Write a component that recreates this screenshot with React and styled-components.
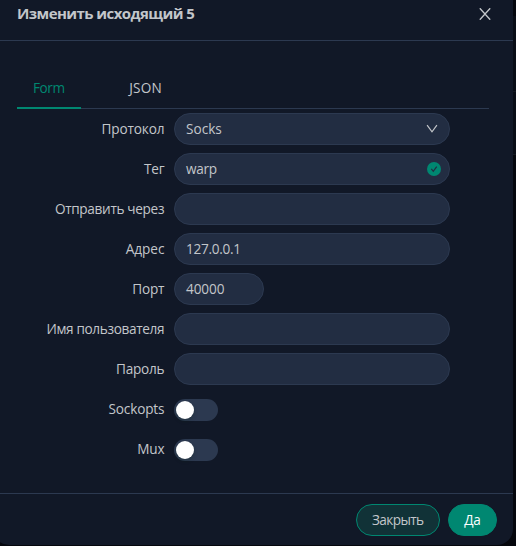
import React from "react";
import styled, { createGlobalStyle } from "styled-components";

const Global = createGlobalStyle`
  *, *::before, *::after { box-sizing: border-box; }
  html, body { margin: 0; background: #05070d; }
  body { width: 516px; height: 546px; overflow: hidden; }
  button, input { font: inherit; }
`;

const Page = styled.main`
  position: relative;
  width: 516px;
  height: 546px;
  overflow: hidden;
  background: #05070d;
  font-family: "Open Sans", "Noto Sans", sans-serif;
  font-size: 13.6px;
  font-weight: 500;
  line-height: 22px;
  color: #c3c6ca;
`;

const Backdrop = styled.div`
  position: absolute;
  top: 0;
  right: 0;
  width: 20px;
  height: 546px;
  display: grid;
  grid-template-rows: 16px 76px 63px 391px;
`;

const BackdropPanel = styled.div`
  background: ${(p) => (p.$lit ? "#090d16" : "#05070d")};
  border-bottom: 1px solid ${(p) => (p.$lit ? "#151a22" : "transparent")};
`;

const Dialog = styled.section`
  position: relative;
  width: 520px;
  height: 545px;
  margin-left: -7px;
  display: flex;
  flex-direction: column;
  background: #111827;
  border-radius: 0 0 16px 16px;
`;

const Header = styled.header`
  height: 41px;
  padding: 3px 22px 0 24px;
  display: flex;
  justify-content: space-between;
  align-items: flex-start;
  border-bottom: 1px solid #2c3950;
`;

const Label = styled.span`
  letter-spacing: ${(p) => p.$track || 0}px;
  margin-right: ${(p) => -(p.$track || 0)}px;
  white-space: nowrap;
`;

const Title = styled.h1`
  margin: 0;
  font-size: 15px;
  font-weight: 700;
  line-height: 20px;
`;

const CloseButton = styled.button`
  width: 12px;
  height: 12px;
  margin-top: 5px;
  padding: 0;
  border: 0;
  background: none;
  color: inherit;
  svg { display: block; }
`;

const Tabs = styled.nav`
  margin: 24px 24px 0;
  width: 472px;
  height: 44px;
  display: flex;
  gap: 32px;
  border-bottom: 1px solid #2c3950;
`;

const Tab = styled.button`
  width: ${(p) => p.$width}px;
  height: 44px;
  padding: 3px 0 0;
  border: 0;
  border-bottom: 2px solid ${(p) => (p.$active ? "#008771" : "transparent")};
  background: none;
  color: ${(p) => (p.$active ? "#008771" : "inherit")};
`;

const Form = styled.form`
  flex: 1;
  padding-top: 4px;
`;

const Row = styled.div`
  display: grid;
  grid-template-columns: 171.5px 276px;
  column-gap: 9.5px;
  align-items: center;
  height: 32px;
  margin-bottom: 8px;
`;

const RowLabel = styled.label`
  display: flex;
  justify-content: flex-end;
`;

const Field = styled.div`
  width: ${(p) => p.$width || 276}px;
  height: 32px;
  padding: 0 ${(p) => p.$end || 11}px 0 11px;
  display: flex;
  align-items: center;
  justify-content: space-between;
  background: #222d42;
  border: 1px solid #2c3950;
  border-radius: 16px;
  svg { flex: none; }
`;

const Toggle = styled.button`
  width: 44px;
  height: 22px;
  margin-top: 2px;
  padding: 2px;
  display: flex;
  border: 0;
  border-radius: 11px;
  background: #2c3950;
`;

const Knob = styled.span`
  width: 18px;
  height: 18px;
  border-radius: 50%;
  background: #fff;
  box-shadow: 0 2px 4px rgba(0, 35, 11, 0.2);
`;

const Footer = styled.footer`
  height: 52px;
  padding: 10px 16px;
  display: flex;
  justify-content: flex-end;
  gap: 8px;
  border-top: 1px solid #2c3950;
`;

const Button = styled.button`
  width: ${(p) => p.$width}px;
  height: 32px;
  padding: 0;
  border-radius: 16px;
  border: 1px solid #008771;
  background: ${(p) => (p.$primary ? "#008771" : "#113237")};
  color: ${(p) => (p.$primary ? "#fff" : "inherit")};
`;

const CloseIcon = () => (
  <svg width="12" height="12" viewBox="0 0 12 12" fill="none" stroke="currentColor" strokeWidth="1.4">
    <path d="M0.8 0.3 L11.2 11.7 M11.2 0.3 L0.8 11.7" />
  </svg>
);

const ChevronIcon = () => (
  <svg width="12" height="12" viewBox="0 0 12 12" fill="none" stroke="currentColor" strokeWidth="1.2">
    <path d="M1.1 2.1 L6 8.8 L10.9 2.1" />
  </svg>
);

const ValidIcon = () => (
  <svg width="14" height="14" viewBox="0 0 14 14" fill="none">
    <circle cx="7" cy="7" r="7" fill="#008771" />
    <path d="M4.3 6.8 L6.3 9.3 L9.7 4.7" stroke="#222d42" strokeWidth="1.2" />
  </svg>
);

const fields = [
  { label: "Протокол", track: -0.15, value: "Socks", valueTrack: 0, icon: <ChevronIcon /> },
  { label: "Тег", track: -0.2, value: "warp", valueTrack: -0.3, icon: <ValidIcon />, end: 8 },
  { label: "Отправить через", track: -0.32, value: "" },
  { label: "Адрес", track: 0, value: "127.0.0.1", valueTrack: -0.3 },
  { label: "Порт", track: -0.15, value: "40000", valueTrack: -0.1, width: 90 },
  { label: "Имя пользователя", track: -0.34, value: "" },
  { label: "Пароль", track: -0.25, value: "" },
];

const switches = [
  { label: "Sockopts", track: -0.15 },
  { label: "Mux", track: -0.2 },
];

export default function App() {
  return (
    <Page>
      <Global />
      <Backdrop>
        <BackdropPanel />
        <BackdropPanel $lit />
        <BackdropPanel $lit />
        <BackdropPanel />
      </Backdrop>
      <Dialog role="dialog">
        <Header>
          <Title><Label $track={-0.56}>Изменить исходящий 5</Label></Title>
          <CloseButton aria-label="Закрыть"><CloseIcon /></CloseButton>
        </Header>
        <Tabs>
          <Tab $active $width={64}><Label $track={-0.4}>Form</Label></Tab>
          <Tab $width={65}><Label $track={0.2}>JSON</Label></Tab>
        </Tabs>
        <Form>
          {fields.map((f) => (
            <Row key={f.label}>
              <RowLabel><Label $track={f.track}>{f.label}</Label></RowLabel>
              <Field $width={f.width} $end={f.end}>
                <Label $track={f.valueTrack}>{f.value}</Label>
                {f.icon}
              </Field>
            </Row>
          ))}
          {switches.map((s) => (
            <Row key={s.label}>
              <RowLabel><Label $track={s.track}>{s.label}</Label></RowLabel>
              <Toggle type="button" role="switch" aria-checked="false"><Knob /></Toggle>
            </Row>
          ))}
        </Form>
        <Footer>
          <Button $width={84}><Label $track={-0.58}>Закрыть</Label></Button>
          <Button $width={49} $primary><Label $track={-0.3}>Да</Label></Button>
        </Footer>
      </Dialog>
    </Page>
  );
}
